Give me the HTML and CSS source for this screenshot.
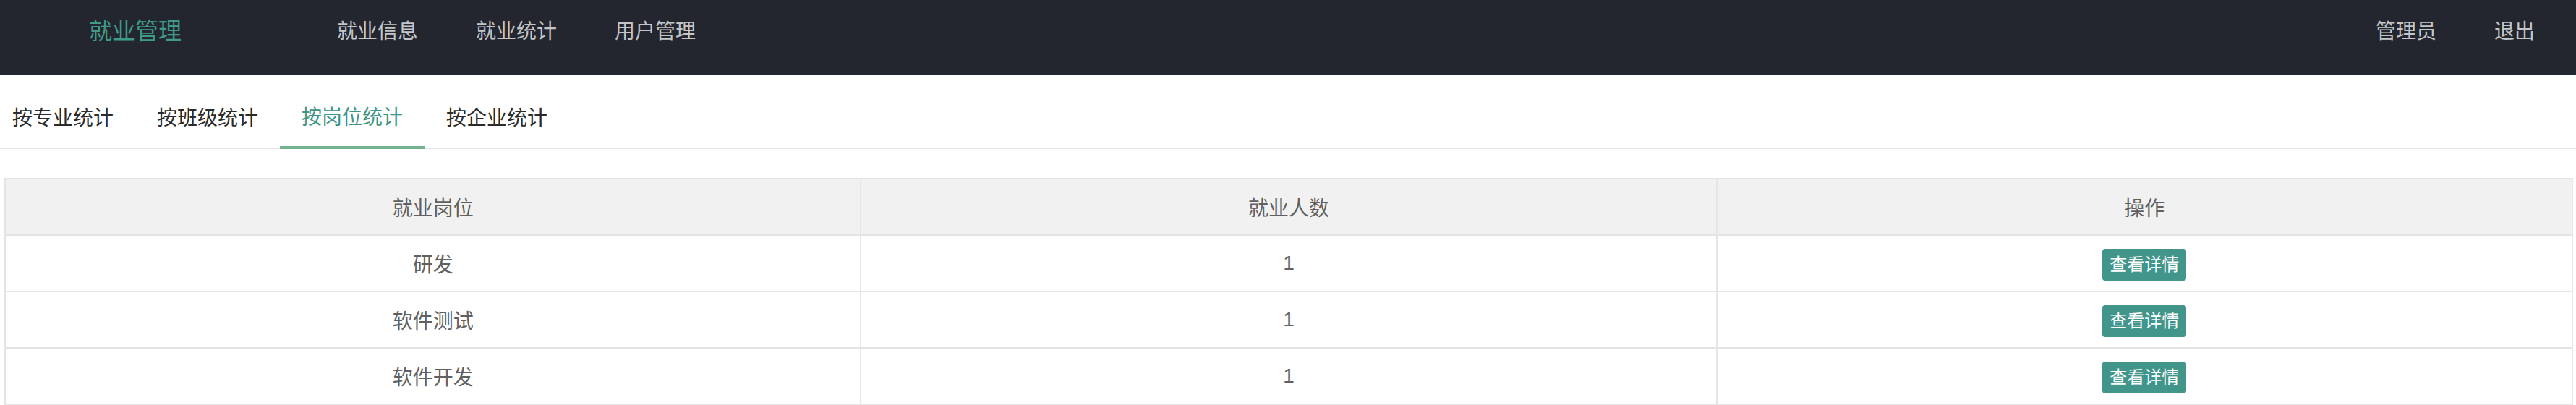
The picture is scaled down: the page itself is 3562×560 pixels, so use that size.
FILE: index.html
```html
<!DOCTYPE html>
<html lang="zh-CN">
<head>
<meta charset="utf-8">
<title>就业管理</title>
<link rel="stylesheet" href="styles.css">
</head>
<body>
<header class="header">
  <div class="logo">就业管理</div>
  <ul class="nav">
    <li class="nav-item">就业信息</li>
    <li class="nav-item">就业统计</li>
    <li class="nav-item">用户管理</li>
  </ul>
  <ul class="nav nav-right">
    <li class="nav-item">管理员</li>
    <li class="nav-item">退出</li>
  </ul>
</header>
<main class="main">
  <ul class="tabs">
    <li class="tab">按专业统计</li>
    <li class="tab">按班级统计</li>
    <li class="tab tab-active">按岗位统计</li>
    <li class="tab">按企业统计</li>
  </ul>
  <table class="table">
    <thead>
      <tr><th>就业岗位</th><th>就业人数</th><th>操作</th></tr>
    </thead>
    <tbody>
      <tr><td>研发</td><td>1</td><td><span class="btn">查看详情</span></td></tr>
      <tr><td>软件测试</td><td>1</td><td><span class="btn">查看详情</span></td></tr>
      <tr><td>软件开发</td><td>1</td><td><span class="btn">查看详情</span></td></tr>
    </tbody>
  </table>
</main>
</body>
</html>
```
FILE: styles.css
```css
* { box-sizing: border-box; }
html, body { margin: 0; padding: 0; background: #fff; }
body {
  font-family: "Liberation Sans", "Noto Sans CJK SC", sans-serif;
  color: #333;
  overflow: hidden;
}
ul { list-style: none; margin: 0; padding: 0; }

.header {
  display: flex;
  align-items: flex-start;
  height: 104px;
  background: #23262e;
}
.logo {
  width: 426px;
  padding-left: 123px;
  font-size: 32px;
  line-height: 86px;
  color: #3f9a8a;
}
.nav { display: flex; }
.nav-item {
  padding: 0 40px;
  font-size: 28px;
  line-height: 88px;
  color: #c4c5c7;
}
.nav-right { margin-left: auto; padding-right: 17px; }

.main { padding-top: 20px; }
.tabs {
  display: flex;
  height: 82px;
  padding-left: 17px;
  border-bottom: 2px solid #e4e4e4;
}
.tab {
  padding: 0 30px;
  font-size: 28px;
  line-height: 80px;
  height: 82px;
  color: #2b2b2b;
}
.tab:first-child { padding-left: 0; }
.tab-active {
  color: #3d9585;
  border-bottom: 4px solid #72b28e;
  line-height: 78px;
}

.table {
  margin: 40px 0 0 6px;
  width: 3552px;
  table-layout: fixed;
  border-collapse: separate;
  border-spacing: 0;
  border-top: 2px solid #e4e4e4;
  border-left: 2px solid #e4e4e4;
  font-size: 28px;
  color: #606060;
}
.table th, .table td {
  height: 78px;
  padding: 0 30px;
  text-align: center;
  vertical-align: middle;
  font-weight: normal;
  border-right: 2px solid #e6e6e6;
  border-bottom: 2px solid #e4e4e4;
}
.table th { background: #f1f1f1; }
.btn {
  display: inline-block;
  height: 44px;
  line-height: 44px;
  padding: 0 10px;
  margin-top: 4px;
  font-size: 24px;
  color: #fff;
  background: #42958a;
  border-radius: 4px;
  vertical-align: middle;
}
```
